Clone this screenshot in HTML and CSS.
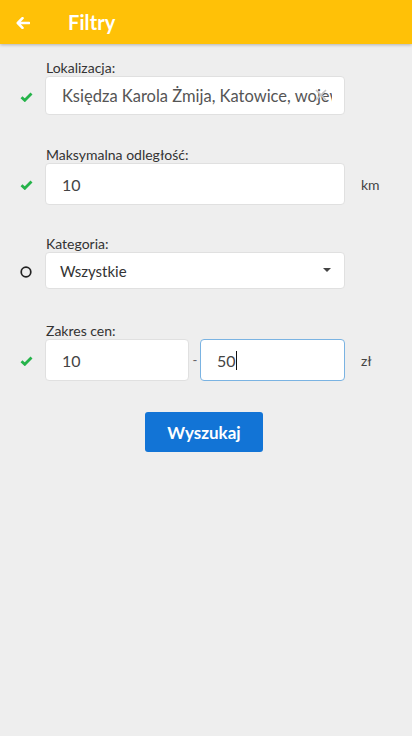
FILE: index.html
```html
<!DOCTYPE html>
<html lang="pl">
<head>
<meta charset="utf-8">
<title>Filtry</title>
<link rel="stylesheet" href="styles.css">
</head>
<body>
<header class="topbar">
  <span class="back">
    <svg width="14" height="12" viewBox="0 0 14 12"><path d="M6.5 1.2 L1.8 6 L6.5 10.8 M2 6 H13" fill="none" stroke="#fff" stroke-width="2.6" stroke-linecap="round" stroke-linejoin="round"/></svg>
  </span>
  <h1 class="title">Filtry</h1>
</header>

<main class="form">
  <section class="group g1">
    <div class="label">Lokalizacja:</div>
    <div class="row">
      <span class="status"><svg width="13" height="10" viewBox="0 0 13 10"><path d="M1.5 5.2 L4.8 8.3 L11.5 1.6" fill="none" stroke="#25b34a" stroke-width="2.8" stroke-linejoin="miter"/></svg></span>
      <div class="field field-loc">
        <span class="clip"><span class="value loc">Księdza Karola Żmija, Katowice, wojew</span></span>
        <span class="clear"><svg width="12" height="12" viewBox="0 0 12 12"><path d="M1 1 L11 11 M11 1 L1 11" stroke="#c4c4c4" stroke-width="1.6"/></svg></span>
      </div>
    </div>
  </section>

  <section class="group g2">
    <div class="label">Maksymalna odległość:</div>
    <div class="row">
      <span class="status"><svg width="13" height="10" viewBox="0 0 13 10"><path d="M1.5 5.2 L4.8 8.3 L11.5 1.6" fill="none" stroke="#25b34a" stroke-width="2.8"/></svg></span>
      <div class="field field-tall"><span class="value">10</span></div>
      <span class="suffix">km</span>
    </div>
  </section>

  <section class="group g3">
    <div class="label">Kategoria:</div>
    <div class="row">
      <span class="status"><svg width="12" height="12" viewBox="0 0 12 12"><circle cx="6" cy="6" r="4.8" fill="none" stroke="#222" stroke-width="1.7"/></svg></span>
      <div class="field field-select">
        <span class="value sel">Wszystkie</span>
        <span class="caret"></span>
      </div>
    </div>
  </section>

  <section class="group g4">
    <div class="label">Zakres cen:</div>
    <div class="row">
      <span class="status"><svg width="13" height="10" viewBox="0 0 13 10"><path d="M1.5 5.2 L4.8 8.3 L11.5 1.6" fill="none" stroke="#25b34a" stroke-width="2.8"/></svg></span>
      <div class="range">
        <div class="field field-tall half"><span class="value">10</span></div>
        <span class="dash">-</span>
        <div class="field field-tall half focused"><span class="value">50<span class="cursor"></span></span></div>
      </div>
      <span class="suffix">zł</span>
    </div>
  </section>

  <div class="actions">
    <button class="search" type="button">Wyszukaj</button>
  </div>
</main>
</body>
</html>
```

FILE: styles.css
```css
* { box-sizing: border-box; }

html, body {
  margin: 0;
  padding: 0;
}

body {
  width: 412px;
  min-height: 736px;
  background: #eeeeee;
  font-family: Lato, "Open Sans", sans-serif;
  color: #333;
}

.topbar {
  height: 44px;
  background: #ffc107;
  display: flex;
  align-items: center;
  box-shadow: 0 1px 3px rgba(0, 0, 0, 0.25);
}

.back {
  width: 68px;
  display: flex;
  padding-left: 16px;
  padding-top: 1px;
}

.title {
  margin: 0;
  font-size: 20px;
  font-weight: 700;
  color: #fff;
  letter-spacing: 0.1px;
}

.form {
  display: flex;
  flex-direction: column;
  padding-top: 15px;
}

.group { display: flex; flex-direction: column; }
.g2 { margin-top: 31px; }
.g3 { margin-top: 30px; }
.g4 { margin-top: 33px; }

.label {
  margin-left: 46px;
  font-size: 14px;
  line-height: 17px;
  color: #333;
}

.row {
  display: flex;
  align-items: center;
}

.status {
  width: 45px;
  display: flex;
  justify-content: center;
  padding-left: 7px;
  padding-top: 2px;
}

.field {
  position: relative;
  width: 300px;
  height: 39px;
  background: #fff;
  border: 1px solid #e0e0e0;
  border-radius: 4px;
  display: flex;
  align-items: center;
  padding-left: 16px;
  overflow: hidden;
}

.field-loc { padding-right: 12px; }
.field-tall { height: 42px; }
.field-select { height: 37px; padding-left: 14px; }

.clip {
  flex: 1;
  overflow: hidden;
  display: flex;
}

.value {
  font-size: 16px;
  color: #444;
  white-space: nowrap;
  display: flex;
  align-items: center;
}

.loc {
  font-size: 16.5px;
  color: #555;
}

.sel { font-size: 15px; color: #333; }

.clear {
  position: absolute;
  right: 17px;
  top: 12px;
  display: flex;
}

.caret {
  position: absolute;
  right: 13px;
  top: 15px;
  width: 0;
  height: 0;
  border-left: 4px solid transparent;
  border-right: 4px solid transparent;
  border-top: 4px solid #444;
}

.suffix {
  margin-left: 16px;
  font-size: 14px;
  color: #444;
}

.range {
  width: 300px;
  display: flex;
  align-items: center;
}

.half { width: 144px; }
.range .half:last-child { width: 145px; }

.dash {
  width: 11px;
  text-align: center;
  font-size: 13px;
  color: #666;
  padding-left: 1px;
}

.focused {
  border-color: #7ab3e2;
}

.cursor {
  display: inline-block;
  width: 1px;
  height: 19px;
  background: #111;
}

.actions {
  display: flex;
  justify-content: center;
  margin-top: 31px;
  padding-right: 4px;
}

.search {
  width: 118px;
  height: 40px;
  border: none;
  border-radius: 3px;
  background: #1274d6;
  color: #fff;
  font-family: Lato, sans-serif;
  font-size: 17px;
  font-weight: 700;
  cursor: pointer;
}
```
